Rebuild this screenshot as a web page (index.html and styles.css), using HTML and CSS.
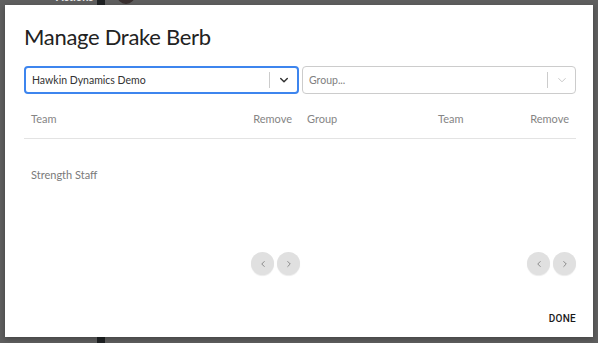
FILE: index.html
```html
<!DOCTYPE html>
<html>
<head>
<meta charset="utf-8">
<link rel="stylesheet" href="styles.css">
</head>
<body>
<div class="backdrop">
  <div class="bg-label">Actions</div>
  <div class="bg-bar"></div>
  <div class="bg-avatar"></div>
</div>
<div class="modal">
  <h1 class="title">Manage Drake Berb</h1>
  <div class="columns">
    <div class="col col-left">
      <div class="select select-active">
        <span class="select-value">Hawkin Dynamics Demo</span>
        <span class="select-sep"></span>
        <span class="select-arrow">
          <svg width="12" height="12" viewBox="0 0 20 20"><path d="M4.5 7.5 L10 13 L15.5 7.5" fill="none" stroke="#333" stroke-width="2.4" stroke-linecap="round" stroke-linejoin="round"/></svg>
        </span>
      </div>
      <div class="thead thead-left">
        <span>Team</span>
        <span>Remove</span>
      </div>
      <div class="trow">
        <span>Strength Staff</span>
      </div>
      <div class="pager">
        <button class="page-btn"><svg width="10" height="10" viewBox="0 0 20 20"><path d="M12.5 5 L7.5 10 L12.5 15" fill="none" stroke="#8a8a8a" stroke-width="2" stroke-linecap="round" stroke-linejoin="round"/></svg></button>
        <button class="page-btn"><svg width="10" height="10" viewBox="0 0 20 20"><path d="M7.5 5 L12.5 10 L7.5 15" fill="none" stroke="#8a8a8a" stroke-width="2" stroke-linecap="round" stroke-linejoin="round"/></svg></button>
      </div>
    </div>
    <div class="col col-right">
      <div class="select select-right">
        <span class="select-placeholder">Group...</span>
        <span class="select-sep"></span>
        <span class="select-arrow">
          <svg width="12" height="12" viewBox="0 0 20 20"><path d="M4.5 7.5 L10 13 L15.5 7.5" fill="none" stroke="#c6c6c6" stroke-width="1.6" stroke-linecap="round" stroke-linejoin="round"/></svg>
        </span>
      </div>
      <div class="thead thead-right">
        <span>Group</span>
        <span>Team</span>
        <span>Remove</span>
      </div>
      <div class="trow"></div>
      <div class="pager">
        <button class="page-btn"><svg width="10" height="10" viewBox="0 0 20 20"><path d="M12.5 5 L7.5 10 L12.5 15" fill="none" stroke="#8a8a8a" stroke-width="2" stroke-linecap="round" stroke-linejoin="round"/></svg></button>
        <button class="page-btn"><svg width="10" height="10" viewBox="0 0 20 20"><path d="M7.5 5 L12.5 10 L7.5 15" fill="none" stroke="#8a8a8a" stroke-width="2" stroke-linecap="round" stroke-linejoin="round"/></svg></button>
      </div>
    </div>
  </div>
  <div class="footer">
    <button class="done">DONE</button>
  </div>
</div>
</body>
</html>
```

FILE: styles.css
```css
* { box-sizing: border-box; }
html, body {
  margin: 0;
  padding: 0;
  width: 598px;
  height: 343px;
  overflow: hidden;
}
body {
  background: #5f5f5f;
  font-family: Lato, "Open Sans", sans-serif;
  position: relative;
}
.backdrop { position: absolute; inset: 0; }
.bg-label {
  position: absolute;
  left: 56px;
  top: -9px;
  color: #e6e6e6;
  font-size: 11px;
  line-height: 12px;
  font-weight: 700;
}
.bg-bar {
  position: absolute;
  left: 97px;
  top: 0;
  width: 8px;
  height: 343px;
  background: #1f2224;
}
.bg-avatar {
  position: absolute;
  left: 117px;
  top: -14px;
  width: 18px;
  height: 18px;
  border-radius: 50%;
  background: #3a3030;
}
.modal {
  position: absolute;
  left: 5px;
  top: 5px;
  width: 588px;
  height: 332px;
  background: #ffffff;
  padding: 0 17px 0 19px;
  display: flex;
  flex-direction: column;
  box-shadow: 0 2px 6px rgba(0,0,0,0.3);
}
.title {
  margin: 17px 0 0 0;
  font-size: 22px;
  font-weight: 400;
  color: #222222;
  line-height: 30px;
  letter-spacing: -0.3px;
}
.columns {
  margin-top: 14px;
  display: grid;
  grid-template-columns: 276px 276px;
}
.col { display: flex; flex-direction: column; }
.select {
  height: 28px;
  border-radius: 4px;
  display: flex;
  align-items: center;
  font-size: 10.5px;
}
.select-active {
  border: 2px solid #3d85ee;
  margin-right: 1px;
  padding-left: 6px;
  color: #333333;
}
.select-right {
  border: 1px solid #cccccc;
  margin-left: 2px;
  padding-left: 6px;
}
.select-value, .select-placeholder { flex: 1; }
.select-placeholder { color: #808080; }
.select-sep {
  width: 1px;
  height: 16px;
  background: #cccccc;
}
.select-arrow {
  width: 27px;
  display: flex;
  justify-content: center;
  align-items: center;
}
.thead {
  height: 45px;
  display: flex;
  align-items: center;
  border-bottom: 1px solid #e3e3e3;
  font-size: 11px;
  color: #858585;
  padding-top: 4px;
}
.thead-left {
  justify-content: space-between;
  padding-left: 7px;
  padding-right: 8px;
}
.thead-right {
  display: grid;
  grid-template-columns: 131px 1fr auto;
  padding-left: 7px;
  padding-right: 7px;
}
.trow {
  height: 71px;
  display: flex;
  align-items: center;
  padding-left: 7px;
  font-size: 11px;
  color: #7a7a7a;
}
.pager {
  margin-top: 42px;
  display: flex;
  justify-content: flex-end;
  gap: 3px;
}
.page-btn {
  width: 23px;
  height: 23px;
  border-radius: 50%;
  border: none;
  background: #e0e0e0;
  padding: 0;
  display: flex;
  align-items: center;
  justify-content: center;
  box-shadow: 0 1px 1px rgba(0,0,0,0.08);
}
.footer {
  margin-top: auto;
  display: flex;
  justify-content: flex-end;
  padding-bottom: 11px;
}
.done {
  border: none;
  background: none;
  font-family: Roboto, Lato, sans-serif;
  font-size: 10px;
  font-weight: 500;
  color: #1a1a1a;
  letter-spacing: 0.3px;
  padding: 0;
  line-height: 14px;
}
```
